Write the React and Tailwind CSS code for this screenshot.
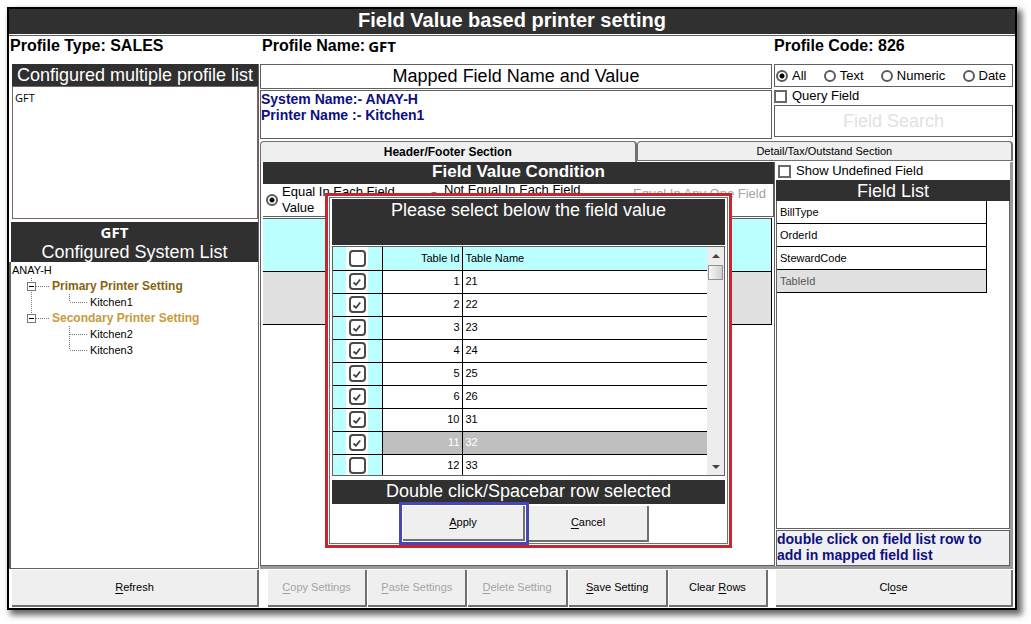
import React, { useState } from 'react';
import clsx from 'clsx';

const tableRows = [
  { id: 1, name: '21' },
  { id: 2, name: '22' },
  { id: 3, name: '23' },
  { id: 4, name: '24' },
  { id: 5, name: '25' },
  { id: 6, name: '26' },
  { id: 10, name: '31' },
  { id: 11, name: '32' },
  { id: 12, name: '33' }
];

const fieldRows = ['BillType', 'OrderId', 'StewardCode', 'TableId'];

// Button caption with the shortcut letter underlined
const Caption = ({ text, hot = 0 }) => (
  <span>
    {text.slice(0, hot)}
    <u className="underline-offset-2">{text[hot]}</u>
    {text.slice(hot + 1)}
  </span>
);

const PushButton = ({ text, hot, disabled, className }) => (
  <button
    type="button"
    disabled={disabled}
    className={clsx(
      'bg-[#efefef] border-r-2 border-b-2 border-[#707070] text-[11px] text-black disabled:text-[#a3a3a3]',
      className
    )}
  >
    <Caption text={text} hot={hot} />
  </button>
);

const Radio = ({ name, label, className, ...rest }) => (
  <label className={clsx('flex items-center gap-1', className)}>
    <input
      type="radio"
      name={name}
      className="appearance-none shrink-0 h-3 w-3 rounded-full border-2 border-[#5c5c5c] bg-white checked:bg-[radial-gradient(circle,#000_2px,#fff_3px)] disabled:border-[#a3a3a3]"
      {...rest}
    />
    <span>{label}</span>
  </label>
);

const SquareCheck = ({ label, className }) => (
  <label className={clsx('flex h-[18px] items-center gap-[5px] text-[13px] leading-4', className)}>
    <input
      type="checkbox"
      className="appearance-none shrink-0 h-[13px] w-[13px] border-2 border-[#6a6a6a] bg-white checked:bg-[#6a6a6a]"
    />
    <span>{label}</span>
  </label>
);

const RowCheck = ({ label, checked, onChange }) => (
  <span className="mx-auto grid h-[22px] w-[22px] place-items-center bg-white">
    <input
      type="checkbox"
      aria-label={label}
      checked={checked}
      onChange={onChange}
      className="peer col-start-1 row-start-1 appearance-none h-[17px] w-[17px] rounded-[4px] border-2 border-[#4a4a4a] bg-white"
    />
    <svg
      viewBox="0 0 10 10"
      className="pointer-events-none invisible col-start-1 row-start-1 h-[10px] w-[10px] peer-checked:visible"
    >
      <path d="M1.5 5.5 L4 7.7 L8.2 2.5" fill="none" stroke="#3f3f3f" strokeWidth="1.8" />
    </svg>
  </span>
);

// Connectors of an expandable tree node
const BranchLines = ({ last }) => (
  <svg width="40" height="16" className="shrink-0" aria-hidden="true">
    <path d={last ? 'M19.5 0V4' : 'M19.5 0V16'} stroke="#777" strokeDasharray="1 1" />
    <path d="M24 8.5H38" stroke="#777" strokeDasharray="1 1" />
    <rect x="15.5" y="4.5" width="8" height="8" fill="#fff" stroke="#777" />
    <path d="M17 8.5H22" stroke="#000" />
  </svg>
);

// Connectors of a leaf under a node
const LeafLines = ({ trunk, last }) => (
  <svg width="78" height="16" className="shrink-0" aria-hidden="true">
    {trunk && <path d="M19.5 0V16" stroke="#777" strokeDasharray="1 1" />}
    <path d={last ? 'M57.5 0V8' : 'M57.5 0V16'} stroke="#777" strokeDasharray="1 1" />
    <path d="M58 8.5H76" stroke="#777" strokeDasharray="1 1" />
  </svg>
);

const ProfilePanel = () => (
  <aside className="flex w-[250px] shrink-0 flex-col border-r border-[#606060]">
    <h2 className="ml-[3px] h-[22px] whitespace-nowrap bg-[#303030] text-center text-[18px] leading-[22px] text-white">
      Configured multiple profile list
    </h2>
    <ul className="ml-[3px] h-[133px] border border-[#7a6464] px-0.5 py-1 font-['Open_Sans',sans-serif] text-[11px] leading-[14px]">
      <li>GFT</li>
    </ul>
    <h2 className="ml-0.5 mt-[3px] bg-[#303030] text-center text-[18px] leading-5 text-white">
      <span className="block pr-10 font-['Open_Sans',sans-serif] text-[15px] font-bold">GFT</span>
      <span className="block">Configured System List</span>
    </h2>
    <ul className="flex-1 border-b border-l-2 border-[#606060] pl-px text-[11px] leading-4">
      <li>ANAY-H</li>
      <li className="flex text-[12px] font-bold text-[#86640f]">
        <BranchLines />
        Primary Printer Setting
      </li>
      <li className="flex">
        <LeafLines trunk last />
        Kitchen1
      </li>
      <li className="flex text-[12px] font-bold text-[#c79a3c]">
        <BranchLines last />
        Secondary Printer Setting
      </li>
      <li className="flex">
        <LeafLines />
        Kitchen2
      </li>
      <li className="flex">
        <LeafLines last />
        Kitchen3
      </li>
    </ul>
  </aside>
);

const MappedHeader = () => (
  <div className="flex">
    <section className="flex flex-1 flex-col gap-px">
      <h2 className="h-[25px] border border-[#606060] text-center text-[18px] leading-[23px]">
        Mapped Field Name and Value
      </h2>
      <div className="h-[49px] border border-[#606060] text-[14px] font-bold leading-4 text-[#0c1080]">
        <p>System Name:- ANAY-H</p>
        <p>Printer Name :- Kitchen1</p>
      </div>
    </section>
    <section className="ml-0.5 mr-0.5 w-[239px]">
      <div className="flex h-[23px] items-center justify-between border border-[#606060] pl-px pr-1.5 text-[13px]">
        <Radio name="kind" label="All" defaultChecked />
        <Radio name="kind" label="Text" />
        <Radio name="kind" label="Numeric" />
        <Radio name="kind" label="Date" />
      </div>
      <SquareCheck label="Query Field" />
      <input
        type="text"
        aria-label="Field Search"
        placeholder="Field Search"
        className="block h-8 w-full border border-[#606060] text-center text-[18px] placeholder:text-[#e2e2e2] focus:outline-none"
      />
    </section>
  </div>
);

const ConditionPanel = () => (
  <section className="flex flex-1 flex-col border-b border-l border-[#606060] pl-0.5">
    <h3 className="h-[22px] bg-[#303030] text-center text-[17px] font-bold leading-5 text-white">
      Field Value Condition
    </h3>
    <div className="flex h-[33px] border-b border-r border-[#606060] pl-[3px] text-[13px] leading-4">
      <Radio name="condition" label="Equal In Each Field Value" defaultChecked className="w-[162px] pr-4" />
      <Radio name="condition" label="Not Equal In Each Field Value" className="w-[189px] pr-8 pb-1" />
      <Radio
        name="condition"
        label="Equal In Any One Field Value"
        disabled
        className="flex-1 pt-1 text-[#a3a3a3]"
      />
    </div>
    <table className="mt-px mr-0.5 table-fixed border-r border-t border-black border-t-[#606060]">
      <tbody>
        <tr className="h-[53px] border-b border-black bg-[#bbffff]"><td /></tr>
        <tr className="h-[53px] border-b border-black bg-[#e1e1e1]"><td /></tr>
      </tbody>
    </table>
  </section>
);

const FieldPanel = () => (
  <section className="flex w-[236px] flex-col border-l border-[#606060] pl-px">
    <SquareCheck label="Show Undefined Field" className="pl-0.5" />
    <h3 className="h-[21px] bg-[#303030] text-center text-[18px] leading-[22px] text-white">Field List</h3>
    <div className="flex-1 border-b border-l border-r border-[#606060]">
      <ul className="mr-[22px] border-r border-black text-[11px] leading-[22px]">
        {fieldRows.map((field) => (
          <li
            key={field}
            className={clsx(
              'border-b border-black pl-[3px]',
              field === 'TableId' && 'bg-[#e1e1e1] text-[#555]'
            )}
          >
            {field}
          </li>
        ))}
      </ul>
    </div>
    <p className="mt-px border border-[#606060] bg-[#f0eff2] pb-0.5 text-[14px] font-bold leading-4 text-[#0c1080]">
      double click on field list row to add in mapped field list
    </p>
  </section>
);

const FieldValueDialog = () => {
  const [selected, setSelected] = useState([1, 2, 3, 4, 5, 6, 10, 11]);

  const toggle = (id) => {
    setSelected(selected.includes(id) ? selected.filter((s) => s !== id) : [...selected, id]);
  };

  const toggleAll = (e) => {
    setSelected(e.target.checked ? tableRows.map((row) => row.id) : []);
  };

  return (
    <div
      role="dialog"
      aria-label="Please select below the field value"
      className="absolute left-[316px] top-[184px] w-[407px] border-3 border-[#c8262e] bg-white p-px"
    >
      <div className="border border-[#707070] py-px px-0.5">
        <h3 className="h-[46px] bg-[#303030] text-center text-[18px] leading-[22px] text-white">
          Please select below the field value
        </h3>
        <div className="mt-px flex h-[230px] overflow-hidden border border-[#606060]">
          <table className="flex-1 table-fixed border-collapse text-[11px]">
            <thead>
              <tr className="h-[23px] border-b border-black bg-[#bbffff]">
                <th className="w-[49px] border-r border-black p-0">
                  <RowCheck
                    label="Select all"
                    checked={selected.length === tableRows.length}
                    onChange={toggleAll}
                  />
                </th>
                <th className="w-20 border-r border-black p-0 pr-0.5 text-right font-normal">Table Id</th>
                <th className="p-0 pl-[3px] text-left font-normal">Table Name</th>
              </tr>
            </thead>
            <tbody>
              {tableRows.map((row) => (
                <tr
                  key={row.id}
                  className={clsx('h-[23px] border-b border-black', row.id === 11 && 'bg-[#bfbfbf] text-white')}
                >
                  <td className="border-r border-black bg-[#bbffff] p-0">
                    <RowCheck
                      label={`Table ${row.name}`}
                      checked={selected.includes(row.id)}
                      onChange={() => toggle(row.id)}
                    />
                  </td>
                  <td className="border-r border-black p-0 pr-0.5 text-right">{row.id}</td>
                  <td className="p-0 pl-[3px]">{row.name}</td>
                </tr>
              ))}
            </tbody>
          </table>
          <div className="flex w-[17px] flex-col items-center bg-[#ededed]">
            <svg viewBox="0 0 8 4" className="my-[7px] h-1 w-2"><path d="M0 4 L4 0 L8 4 Z" fill="#444" /></svg>
            <div className="h-[15px] w-[15px] border border-[#909090] bg-linear-to-r from-[#f8f8f8] to-[#cfcfcf]" />
            <svg viewBox="0 0 8 4" className="mt-auto mb-[6px] h-1 w-2"><path d="M0 0 L4 4 L8 0 Z" fill="#444" /></svg>
          </div>
        </div>
        <h3 className="mt-1 h-6 bg-[#303030] text-center text-[18px] leading-[23px] text-white">
          Double click/Spacebar row selected
        </h3>
        <div className="-mt-0.5 -mb-[3px] flex items-center pl-[67px]">
          <div className="border-3 border-[#4549b5] bg-white p-px">
            <PushButton text="Apply" className="block h-[35px] w-[122px]" />
          </div>
          <PushButton text="Cancel" className="h-9 w-[120px]" />
        </div>
      </div>
    </div>
  );
};

const App = () => {
  return (
    <div className="flex min-h-screen flex-col bg-white pt-[7px] pr-[14px] pb-[14px] pl-[7px] font-['Liberation_Sans',Arial,sans-serif] text-black">
      <div className="relative flex flex-1 flex-col border-2 border-black bg-white shadow-[4px_4px_6px_1px_rgba(0,0,0,0.6)]">
        <h1 className="h-[25px] bg-[#303030] text-center text-[20px] font-bold leading-[23px] text-white">
          Field Value based printer setting
        </h1>

        <div className="mt-px flex h-[29px] border-t border-[#606060] text-[16px] font-bold leading-5">
          <p className="w-[253px] pl-px">Profile Type: SALES</p>
          <p className="flex flex-1 gap-[3px]">
            <span>Profile Name:</span>
            <span className="font-['Open_Sans',sans-serif] text-[15px]">GFT</span>
          </p>
          <p className="w-[241px]">Profile Code: 826</p>
        </div>

        <main className="flex flex-1">
          <ProfilePanel />
          <div className="ml-px flex flex-1 flex-col">
            <MappedHeader />
            {/* Section tabs */}
            <div className="mt-0.5 mr-0.5 flex">
              <button
                type="button"
                className="h-[21px] flex-1 rounded-t-[4px] border-l border-r-2 border-t border-[#707070] bg-[#efefef] text-[12px] font-bold"
              >
                Header/Footer Section
              </button>
              <button
                type="button"
                className="h-5 flex-1 rounded-t-[4px] border border-r-2 border-[#707070] bg-[#efefef] text-[11px]"
              >
                Detail/Tax/Outstand Section
              </button>
            </div>
            <div className="mr-0.5 flex flex-1 border-r-3 border-b-3 border-[#9a9a9a]">
              <ConditionPanel />
              <FieldPanel />
            </div>
          </div>
        </main>

        <footer className="flex h-[39px] py-px pr-0.5 pl-[3px]">
          <PushButton text="Refresh" className="w-[247px]" />
          <div className="flex flex-1 gap-px pr-2 pl-[9px]">
            <PushButton text="Copy Settings" disabled className="flex-1" />
            <PushButton text="Paste Settings" disabled className="flex-1" />
            <PushButton text="Delete Setting" disabled className="flex-1" />
            <PushButton text="Save Setting" className="flex-1" />
            <PushButton text="Clear Rows" hot={6} className="flex-1" />
          </div>
          <PushButton text="Close" hot={2} className="w-[237px]" />
        </footer>

        <FieldValueDialog />
      </div>
    </div>
  );
};

export default App;
